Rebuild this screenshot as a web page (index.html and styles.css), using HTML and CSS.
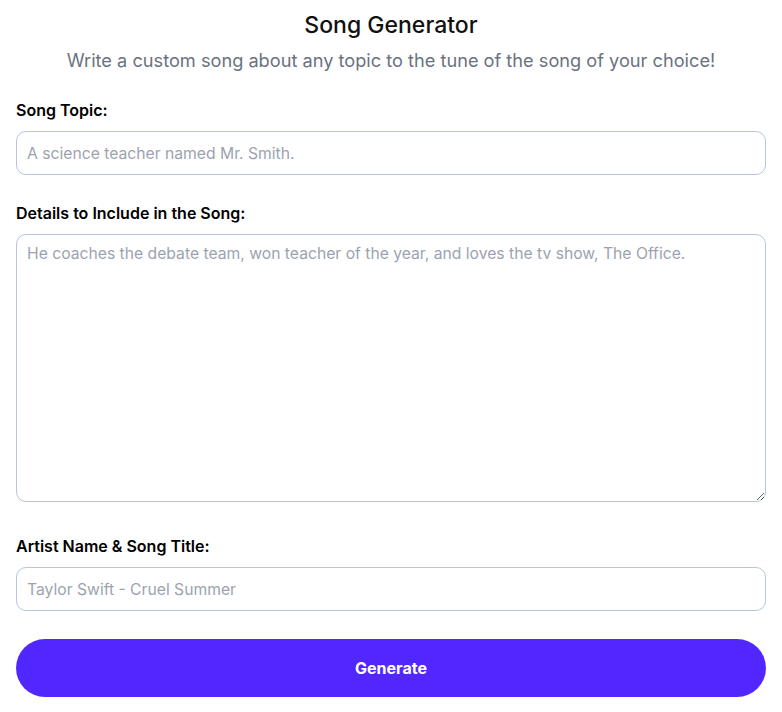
FILE: index.html
```html
<!DOCTYPE html>
<html>
<head>
<meta charset="utf-8">
<link rel="stylesheet" href="styles.css">
</head>
<body>
<main class="page">
  <h1 class="title">Song Generator</h1>
  <p class="subtitle">Write a custom song about any topic to the tune of the song of your choice!</p>
  <form class="form">
    <div class="field">
      <label class="label" for="topic">Song Topic:</label>
      <input class="input" id="topic" type="text" placeholder="A science teacher named Mr. Smith.">
    </div>
    <div class="field">
      <label class="label" for="details">Details to Include in the Song:</label>
      <div class="textarea-wrap"><textarea class="textarea" id="details" placeholder="He coaches the debate team, won teacher of the year, and loves the tv show, The Office."></textarea></div>
    </div>
    <div class="field">
      <label class="label" for="artist">Artist Name &amp; Song Title:</label>
      <input class="input" id="artist" type="text" placeholder="Taylor Swift - Cruel Summer">
    </div>
    <button class="button" type="button">Generate</button>
  </form>
</main>
</body>
</html>
```
FILE: styles.css
```css
* { box-sizing: border-box; }
html, body { margin: 0; padding: 0; background: #fff; }
body { font-family: Inter, "Noto Sans", sans-serif; color: #000; }
.page { padding: 10px 16px 16px; }
.title { margin: 0; text-align: center; font-size: 23px; font-weight: 500; line-height: 30px; color: #111; }
.subtitle { margin: 7px 0 0; text-align: center; font-size: 18.2px; line-height: 26px; color: #6b7280; }
.form { display: flex; flex-direction: column; gap: 28px; margin-top: 27px; }
.field { display: flex; flex-direction: column; gap: 11px; }
.label { font-size: 16px; font-weight: 600; line-height: 20px; color: #000; }
.input, .textarea {
  width: 100%; border: 1px solid #b8c4e0; border-radius: 10px; background: #fff;
  font-family: Inter, "Noto Sans", sans-serif; font-size: 15.7px; color: #111;
  padding: 0 10px; outline: none;
}
.input { height: 44px; }
.textarea-wrap { padding-bottom: 6px; }
.textarea { height: 268px; padding: 9px 10px; resize: vertical; line-height: 20px; display: block; }
.input::placeholder, .textarea::placeholder { color: #9ca3af; }
.button {
  height: 58px; border: none; border-radius: 29px; background: #5227ff; color: #fff;
  font-family: Inter, "Noto Sans", sans-serif; font-size: 16px; font-weight: 700;
}
```
